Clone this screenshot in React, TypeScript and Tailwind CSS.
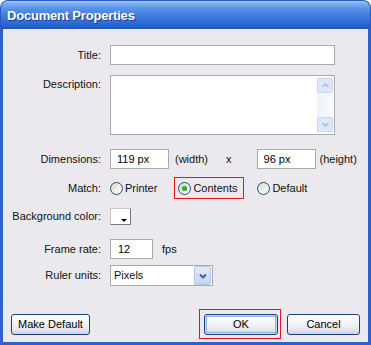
import React from "react";

const Radio = ({ checked }: { checked?: boolean }) => (
  <span className="relative inline-block w-[13px] h-[13px] rounded-full border border-[#1C5180] bg-[linear-gradient(135deg,#D8D6CE_0%,#F2F1EC_60%,#FFFFFF_100%)] shrink-0">
    {checked && (
      <span className="absolute left-[3px] top-[3px] w-[5px] h-[5px] rounded-full bg-[#2EB32E] shadow-[0_0_1px_#6fd66f]" />
    )}
  </span>
);

const Field = ({ w, h = 20, children }: { w: number; h?: number; children?: React.ReactNode }) => (
  <div
    className="flex items-center bg-white border border-[#A7ABB0] pl-[6px] text-black"
    style={{ width: w, height: h }}
  >
    {children}
  </div>
);

const Button = ({ label, w, isDefault }: { label: string; w: number; isDefault?: boolean }) => (
  <div
    className={`h-[21px] flex items-center justify-center rounded-[3px] border border-[#1F3F77] bg-[linear-gradient(to_bottom,#FFFFFF_0%,#F4F5F7_40%,#E6E8EE_75%,#CDD3DE_100%)] text-black ${
      isDefault ? "shadow-[inset_0_0_0_1px_#C4D8F8,inset_0_0_0_2px_#8BB0EA]" : ""
    }`}
    style={{ width: w }}
  >
    {label}
  </div>
);

const Row = ({
  label,
  top,
  children,
  alignTop,
}: {
  label: string;
  top: number;
  children: React.ReactNode;
  alignTop?: boolean;
}) => (
  <div className={`flex ${alignTop ? "items-start" : "items-center"}`} style={{ marginTop: top }}>
    <div className={`w-[98px] text-right ${alignTop ? "pt-[1px]" : ""}`}>{label}</div>
    <div className="ml-[9px] flex items-center">{children}</div>
  </div>
);

export default function App() {
  return (
    <div className="w-[371px] h-[345px] font-['Liberation_Sans',Arial,sans-serif] text-[11px] text-[#111]">
      {/* title bar */}
      <div className="h-[29px] rounded-t-[8px] border-x border-t border-[#2A5BC4] bg-[linear-gradient(to_bottom,#A3C9F7_0%,#7AAEF0_10%,#5590E6_30%,#3F7ADC_55%,#3068D2_80%,#2453BC_100%)] flex items-center pl-[6px] pt-[1px]">
        <span className="text-white font-bold text-[13px] tracking-[-0.2px] [text-shadow:1px_1px_0_#1B3E9A]">
          Document Properties
        </span>
      </div>

      {/* body */}
      <div className="h-[316px] bg-[#EBE9ED] border-x-[3px] border-b-[3px] border-[#2F61CC] flex flex-col">
        <Row label="Title:" top={16}>
          <Field w={225} />
        </Row>

        <Row label="Description:" top={10} alignTop>
          <div className="w-[225px] h-[60px] bg-white border border-[#A7ABB0] flex justify-end pr-[1px] py-[1px]">
            <div className="w-[16px] flex flex-col bg-[linear-gradient(to_right,#EEF2FB,#F8FAFE)]">
              <div className="h-[15px] mt-[1px] rounded-[2px] border border-[#CBD8F2] bg-[#DDE7FA] flex items-center justify-center">
                <svg width="7" height="5" viewBox="0 0 7 5">
                  <path d="M0.5 4 L3.5 1 L6.5 4" fill="none" stroke="#A9B9DA" strokeWidth="1.5" />
                </svg>
              </div>
              <div className="flex-1" />
              <div className="h-[15px] mb-[1px] rounded-[2px] border border-[#CBD8F2] bg-[#DDE7FA] flex items-center justify-center">
                <svg width="7" height="5" viewBox="0 0 7 5">
                  <path d="M0.5 1 L3.5 4 L6.5 1" fill="none" stroke="#A9B9DA" strokeWidth="1.5" />
                </svg>
              </div>
            </div>
          </div>
        </Row>

        <Row label="Dimensions:" top={14}>
          <Field w={59}>119 px</Field>
          <span className="ml-[6px]">(width)</span>
          <span className="ml-[18px]">x</span>
          <span className="ml-[25px]">
            <Field w={59}>96 px</Field>
          </span>
          <span className="ml-[4px]">(height)</span>
        </Row>

        <Row label="Match:" top={8}>
          <div className="flex items-center h-[22px]">
            <Radio />
            <span className="ml-[2px]">Printer</span>
          </div>
          <div className="ml-[17px] flex items-center h-[22px] w-[70px] border border-[#E8141B] pl-[3px]">
            <Radio checked />
            <span className="ml-[2px]">Contents</span>
          </div>
          <div className="ml-[13px] flex items-center h-[22px]">
            <Radio />
            <span className="ml-[2px]">Default</span>
          </div>
        </Row>

        <Row label="Background color:" top={9}>
          <div className="relative w-[21px] h-[17px] bg-white border border-[#C9C7C1] border-r-[#7C7A75] border-b-[#7C7A75]">
            <span className="absolute right-[3px] bottom-[2px] w-0 h-0 border-l-[3px] border-r-[3px] border-t-[3px] border-l-transparent border-r-transparent border-t-black" />
          </div>
        </Row>

        <Row label="Frame rate:" top={14}>
          <Field w={43}>
            <span className="ml-[1px]">12</span>
          </Field>
          <span className="ml-[9px]">fps</span>
        </Row>

        <Row label="Ruler units:" top={6}>
          <div className="w-[103px] h-[21px] bg-white border border-[#A7ABB0] flex items-center pl-[3px] pr-[1px]">
            <span className="flex-1">Pixels</span>
            <div className="w-[17px] h-[19px] rounded-[2px] border border-[#B3C8EE] bg-[linear-gradient(to_bottom,#E4ECFC,#C2D4F6)] flex items-center justify-center">
              <svg width="8" height="6" viewBox="0 0 8 6">
                <path d="M1 1.5 L4 4.5 L7 1.5" fill="none" stroke="#4D6185" strokeWidth="2" />
              </svg>
            </div>
          </div>
        </Row>

        <div className="flex items-center mt-[23px] pl-[8px]">
          <Button label="Make Default" w={79} />
          <div className="ml-auto border border-[#E8141B] pl-[4px] pr-[2px] pt-[4px] pb-[3px]">
            <Button label="OK" w={74} isDefault />
          </div>
          <div className="ml-[6px] mr-[8px]">
            <Button label="Cancel" w={73} />
          </div>
        </div>
      </div>
    </div>
  );
}
